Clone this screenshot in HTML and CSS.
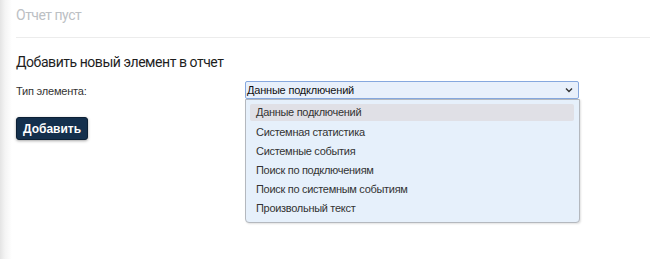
FILE: index.html
```html
<!DOCTYPE html>
<html lang="ru">
<head>
  <meta charset="UTF-8" />
  <title>Отчет</title>
  <link rel="stylesheet" href="styles.css">
</head>
<body>
  <div class="page">
    <div class="report-empty">Отчет пуст</div>

    <h2 class="add-title">Добавить новый элемент в отчет</h2>

    <div class="field-row">
      <label class="field-label">Тип элемента:</label>
      <div class="select-wrap">
        <div class="select-box">
          <span>Данные подключений</span>
          <svg class="chevron" width="8" height="6" viewBox="0 0 8 6">
            <path d="M1 1.5 L4 4.5 L7 1.5" fill="none" stroke="#333" stroke-width="1.4"/>
          </svg>
        </div>
        <ul class="select-list">
          <li class="active">Данные подключений</li>
          <li>Системная статистика</li>
          <li>Системные события</li>
          <li>Поиск по подключениям</li>
          <li>Поиск по системным событиям</li>
          <li>Произвольный текст</li>
        </ul>
      </div>
    </div>

    <button class="add-button">Добавить</button>
  </div>
</body>
</html>
```

FILE: styles.css
```css
* {
  margin: 0;
  padding: 0;
  box-sizing: border-box;
}

body {
  background: #fff;
  font-family: 'Liberation Sans', Arial, sans-serif;
  color: #222;
  width: 650px;
  height: 259px;
  overflow: hidden;
}

.page {
  height: 259px;
  padding: 0 0 0 16px;
  background: linear-gradient(90deg, #e4e4e4 0px, #f4f4f4 5px, #fff 12px);
}

.report-empty {
  font-family: 'Roboto', sans-serif;
  font-size: 14px;
  letter-spacing: -0.5px;
  color: #bcc0c4;
  height: 38px;
  padding-top: 7px;
  border-bottom: 1px solid #ececec;
}

.add-title {
  font-family: 'Roboto', sans-serif;
  font-weight: 400;
  font-size: 14px;
  letter-spacing: -0.45px;
  color: #1e1e1e;
  margin-top: 15px;
  line-height: 18px;
}

.field-row {
  display: flex;
  align-items: flex-start;
  margin-top: 10px;
}

.field-label {
  width: 229px;
  font-size: 11px;
  letter-spacing: -0.2px;
  color: #333;
  line-height: 18px;
  padding-top: 1px;
}

.select-wrap {
  position: relative;
  width: 334px;
}

.select-box {
  height: 18px;
  border: 1px solid #86a8de;
  border-radius: 2px;
  background: #e8f0fb;
  display: flex;
  align-items: center;
  justify-content: space-between;
  padding: 0 5px 0 1px;
  font-size: 11px;
  letter-spacing: -0.2px;
  color: #111;
}

.select-list {
  position: absolute;
  top: 18px;
  left: 0;
  width: 335px;
  list-style: none;
  background: #e6f0fb;
  border: 1px solid #b4b8be;
  border-radius: 0 0 4px 4px;
  padding: 4px 5px 4px 4px;
  box-shadow: 1px 1px 2px rgba(0, 0, 0, 0.12);
}

.select-list li {
  font-size: 11px;
  letter-spacing: -0.3px;
  color: #333;
  height: 19px;
  line-height: 18px;
  padding-left: 6px;
  border-radius: 2px;
}

.select-list li.active {
  background: #e0e0e6;
  height: 17px;
  margin-bottom: 2px;
  line-height: 17px;
}

.add-button {
  display: block;
  margin-top: 17px;
  width: 72px;
  height: 23px;
  background: #14304d;
  color: #fff;
  border: 1px solid #0c2035;
  border-radius: 3px;
  font-family: 'Liberation Sans', Arial, sans-serif;
  font-weight: 700;
  font-size: 12px;
  box-shadow: 0 1px 3px rgba(0, 0, 0, 0.35);
}
```
